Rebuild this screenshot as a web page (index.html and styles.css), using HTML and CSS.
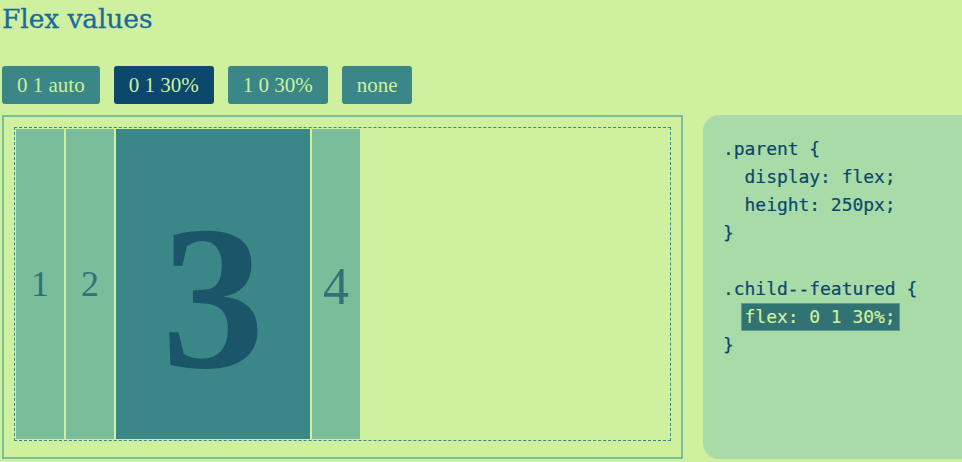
FILE: index.html
```html
<!DOCTYPE html>
<html lang="en">
<head>
<meta charset="utf-8">
<title>Flex values</title>
<link rel="stylesheet" href="styles.css">
</head>
<body>
  <h1 class="title">Flex values</h1>
  <div class="controls">
    <button class="btn">0 1 auto</button>
    <button class="btn btn--active">0 1 30%</button>
    <button class="btn">1 0 30%</button>
    <button class="btn">none</button>
  </div>
  <div class="stage">
    <div class="demo">
      <div class="parent">
        <div class="child"><span class="num num--small">1</span></div>
        <div class="child"><span class="num num--small">2</span></div>
        <div class="child child--featured"><span class="num num--big">3</span></div>
        <div class="child"><span class="num num--mid">4</span></div>
      </div>
    </div>
    <div class="code">
<pre class="code__pre">.parent {
  display: flex;
  height: 250px;
}

.child--featured {
  <span class="code__mark">flex: 0 1 30%;</span>
}</pre>
    </div>
  </div>
</body>
</html>
```
FILE: styles.css
```css
html, body {
  margin: 0;
  padding: 0;
  background: #cff09e;
  overflow: hidden;
}
body {
  padding: 0 2px;
  width: 962px;
  height: 462px;
  box-sizing: border-box;
}
.title {
  margin: 0;
  padding-top: 1px;
  font-family: "DejaVu Serif", serif;
  font-weight: normal;
  font-size: 26.5px;
  line-height: 36px;
  color: #1a6a9c;
  letter-spacing: -0.1px;
  -webkit-text-stroke: 0.3px #1a6a9c;
}
.controls {
  display: flex;
  gap: 14px;
  margin-top: 29px;
  height: 38px;
}
.btn {
  border: none;
  border-radius: 3px;
  background: #3b8686;
  color: #cff09e;
  font-family: "Liberation Serif", serif;
  font-variant-numeric: oldstyle-nums;
  font-size: 21px;
  padding: 0 15px;
  height: 38px;
  cursor: pointer;
}
.btn--active {
  background: #0b486b;
}
.stage {
  display: flex;
  gap: 20px;
  margin-top: 11px;
}
.demo {
  flex: 0 0 681px;
  height: 344px;
  box-sizing: border-box;
  border: 2px solid #79bd9a;
  padding: 10px;
}
.parent {
  display: flex;
  height: 314px;
  box-sizing: border-box;
  border: 1px dashed #3b8686;
}
.child {
  flex: 0 0 48px;
  margin: 1px;
  background: #79bd9a;
  display: flex;
  align-items: center;
  justify-content: center;
}
.child--featured {
  flex: 0 0 194px;
  background: #3b8686;
}
.num {
  font-family: "Liberation Serif", serif;
  color: #31717a;
  line-height: 1;
}
.num--small { font-size: 36px; }
.num--mid {
  font-size: 52px;
  padding-top: 6px;
}
.num--big {
  font-size: 206px;
  font-weight: bold;
  padding-top: 28px;
  color: #1b556a;
}
.code {
  flex: 0 0 300px;
  height: 344px;
  background: #a8dba8;
  border-radius: 16px;
  padding: 20px 21px 20px 20px;
  box-sizing: border-box;
}
.code__pre {
  margin: 0;
  font-family: "DejaVu Sans Mono", monospace;
  font-size: 18px;
  line-height: 28px;
  letter-spacing: -0.05px;
  color: #0b486b;
  -webkit-text-stroke: 0.2px #0b486b;
}
.code__mark {
  display: inline-block;
  line-height: 26px;
  margin-left: -4px;
  padding: 0 3px;
  background: #317272;
  border: 1px solid #5d9c8c;
  color: #cff09e;
  -webkit-text-stroke: 0.2px #cff09e;
}
```
